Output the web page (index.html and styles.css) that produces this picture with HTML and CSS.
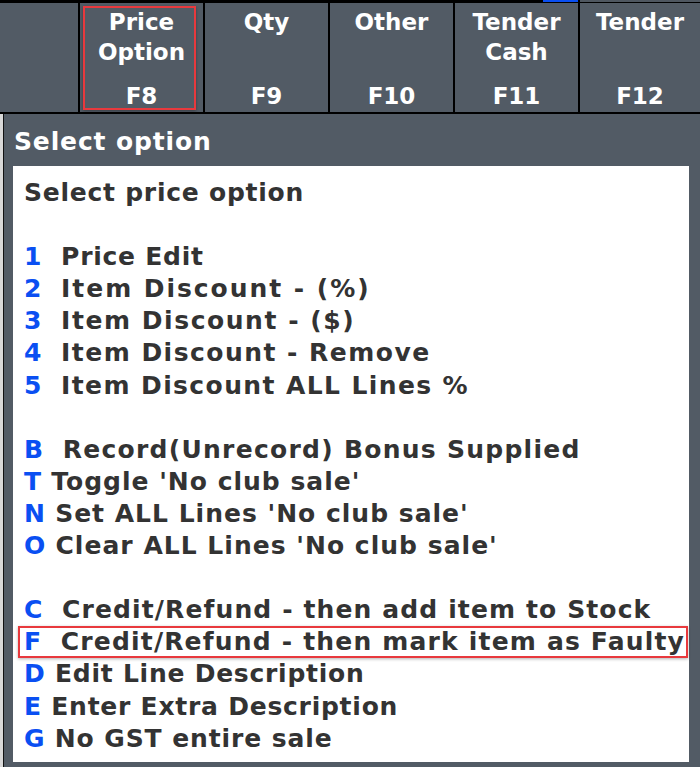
FILE: index.html
```html
<!DOCTYPE html>
<html>
<head>
<meta charset="utf-8">
<link rel="stylesheet" href="styles.css">
</head>
<body>
<div class="toolbar">
  <div class="cell blank"></div>
  <div class="cell btn selected"><div class="label">Price<br>Option</div><div class="key">F8</div></div>
  <div class="cell btn"><div class="label">Qty</div><div class="key">F9</div></div>
  <div class="cell btn"><div class="label">Other</div><div class="key">F10</div></div>
  <div class="cell btn"><div class="label">Tender<br>Cash</div><div class="key">F11</div></div>
  <div class="cell btn last"><div class="label">Tender</div><div class="key">F12</div></div>
</div>
<div class="lower">
  <div class="strip"></div>
  <div class="dialog">
    <div class="title">Select option</div>
    <div class="content">
      <div class="line">Select price option</div>
      <div class="line"> </div>
      <div class="line"><span class="k">1</span>  <span>Price Edit</span></div>
      <div class="line"><span class="k">2</span>  <span class="ls120">Item Discount - (%)</span></div>
      <div class="line"><span class="k">3</span>  <span class="ls80">Item Discount - ($)</span></div>
      <div class="line"><span class="k">4</span>  <span class="ls72">Item Discount - Remove</span></div>
      <div class="line"><span class="k">5</span>  <span class="ls64">Item Discount ALL Lines %</span></div>
      <div class="line"> </div>
      <div class="line"><span class="k">B</span>  <span class="ls52">Record(Unrecord) Bonus Supplied</span></div>
      <div class="line"><span class="k">T</span> <span class="ls25">Toggle 'No club sale'</span></div>
      <div class="line"><span class="k">N</span> <span class="ls25">Set ALL Lines 'No club sale'</span></div>
      <div class="line"><span class="k">O</span> <span class="ls27">Clear ALL Lines 'No club sale'</span></div>
      <div class="line"> </div>
      <div class="line"><span class="k">C</span>  <span class="ls37">Credit/Refund - then add item to Stock</span></div>
      <div class="line hl"><span class="k">F</span>  <span class="ls43">Credit/Refund - then mark item as Faulty</span></div>
      <div class="line"><span class="k">D</span> <span>Edit Line Description</span></div>
      <div class="line"><span class="k">E</span> <span>Enter Extra Description</span></div>
      <div class="line"><span class="k">G</span> <span class="ls15">No GST entire sale</span></div>
    </div>
  </div>
</div>
</body>
</html>
```
FILE: styles.css
```css
html, body {
  margin: 0;
  padding: 0;
  width: 700px;
  height: 767px;
  overflow: hidden;
  background: #d8d8d8;
  font-family: "DejaVu Sans", Verdana, sans-serif;
  font-weight: bold;
}
.toolbar {
  position: relative;
  display: flex;
  gap: 2px;
  height: 109px;
  background: #000;
  border-top: 3px solid #000;
  border-bottom: 2px solid #000;
}
.toolbar::before {
  content: "";
  position: absolute;
  left: 543px;
  top: -3px;
  width: 35px;
  height: 2px;
  background: #0a4ff2;
}
.toolbar::after {
  content: "";
  position: absolute;
  left: 580px;
  right: 0;
  top: -3px;
  height: 2px;
  background: #4f5760;
}
.cell {
  background: #525b65;
  flex: none;
  box-sizing: border-box;
}
.blank { width: 78px; }
.btn {
  width: 123px;
  position: relative;
  display: flex;
  flex-direction: column;
  justify-content: space-between;
  align-items: center;
  color: #fff;
  font-size: 23px;
  line-height: 30px;
  text-align: center;
  padding: 4px 0 1px;
}
.btn.last { flex: 1; }
.selected::after {
  content: "";
  position: absolute;
  left: 3px;
  top: 3px;
  width: 113px;
  height: 104px;
  box-sizing: border-box;
  border: 2px solid #e8393d;
  box-shadow: 0 1px 3px rgba(0,0,0,0.35);
}
.lower {
  display: flex;
  height: 653px;
}
.strip {
  width: 3px;
  background: #d8d8d8;
  border-right: 1px solid #111;
}
.dialog {
  flex: 1;
  background: #525b65;
  padding: 0 11px 5px 9px;
  display: flex;
  flex-direction: column;
}
.title {
  color: #fff;
  font-size: 25px;
  letter-spacing: 0.85px;
  height: 52px;
  line-height: 56px;
  padding-left: 1px;
}
.content {
  flex: 1;
  background: #fff;
  color: #333;
  font-size: 25px;
  letter-spacing: 0.75px;
  line-height: 32.1px;
  padding: 11px 0 0 11px;
}
.line {
  white-space: pre;
  height: 32.1px;
}
.k { color: #0a4ff2; }
.ls120 { letter-spacing: 1.95px; }
.ls80 { letter-spacing: 1.55px; }
.ls72 { letter-spacing: 1.47px; }
.ls64 { letter-spacing: 1.39px; }
.ls52 { letter-spacing: 1.27px; }
.ls43 { letter-spacing: 1.18px; }
.ls37 { letter-spacing: 1.12px; }
.ls27 { letter-spacing: 1.02px; }
.ls25 { letter-spacing: 1.0px; }
.ls15 { letter-spacing: 0.9px; }
.hl {
  position: relative;
}
.hl::after {
  content: "";
  position: absolute;
  left: -6px;
  right: 1px;
  top: 0;
  height: 32px;
  box-sizing: border-box;
  border: 2px solid #e8393d;
  box-shadow: 0 1px 3px rgba(0,0,0,0.3);
}
```
